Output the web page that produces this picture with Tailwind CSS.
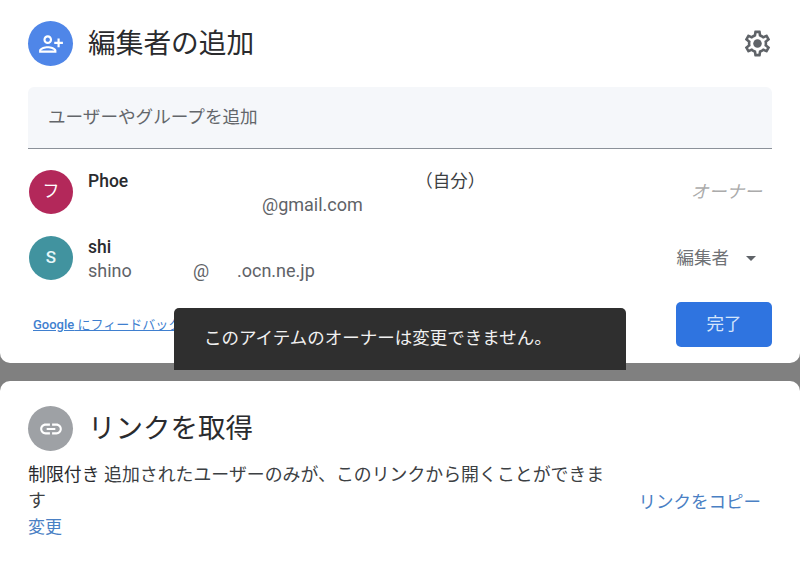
<!DOCTYPE html>
<html lang="ja">
<head>
    <meta charset="UTF-8">
    <title>編集者の追加</title>
    <script src="https://cdn.jsdelivr.net/npm/@tailwindcss/browser@4"></script>
</head>
<body class="bg-[#808080] font-[Roboto,'Noto_Sans_CJK_JP',sans-serif] overflow-hidden">
    <div class="relative w-[800px] h-[561px] flex flex-col gap-[18px]">
        <!-- share card -->
        <div class="h-[363px] bg-white rounded-b-[10px] pl-[28px] pr-[28px] pt-[21px]">
            <div class="flex items-center h-[45px]">
                <div class="w-[45px] h-[45px] rounded-full bg-[#4f86e8] flex items-center justify-center">
                    <svg class="w-[26px] h-[26px] -scale-x-100" viewBox="0 0 24 24" fill="#fff"><path d="M15 12c2.21 0 4-1.79 4-4s-1.79-4-4-4-4 1.79-4 4 1.79 4 4 4zm0-6c1.1 0 2 .9 2 2s-.9 2-2 2-2-.9-2-2 .9-2 2-2zm0 8c-2.67 0-8 1.34-8 4v2h16v-2c0-2.66-5.33-4-8-4zm-6 4c.22-.72 3.31-2 6-2 2.7 0 5.8 1.29 6 2H9zm-3-3v-3h3v-2H6V7H4v3H1v2h3v3h2z"/></svg>
                </div>
                <h1 class="ml-[15px] text-[27.7px] leading-[40px] text-[#2a2b2e]">編集者の追加</h1>
                <svg class="ml-auto mr-[-1px] w-[31px] h-[31px]" viewBox="0 0 24 24" fill="#5f6368"><path d="M19.43 12.98c.04-.32.07-.64.07-.98 0-.34-.03-.66-.07-.98l2.11-1.65c.19-.15.24-.42.12-.64l-2-3.46c-.09-.16-.26-.25-.44-.25-.06 0-.12.01-.17.03l-2.49 1c-.52-.4-1.08-.73-1.69-.98l-.38-2.65C14.46 2.18 14.25 2 14 2h-4c-.25 0-.46.18-.49.42l-.38 2.65c-.61.25-1.17.59-1.69.98l-2.49-1c-.06-.02-.12-.03-.18-.03-.17 0-.34.09-.43.25l-2 3.46c-.13.22-.07.49.12.64l2.11 1.65c-.04.32-.07.65-.07.98 0 .33.03.66.07.98l-2.11 1.65c-.19.15-.24.42-.12.64l2 3.46c.09.16.26.25.44.25.06 0 .12-.01.17-.03l2.49-1c.52.4 1.08.73 1.69.98l.38 2.65c.03.24.24.42.49.42h4c.25 0 .46-.18.49-.42l.38-2.65c.61-.25 1.17-.59 1.69-.98l2.49 1c.06.02.12.03.18.03.17 0 .34-.09.43-.25l2-3.46c.12-.22.07-.49-.12-.64l-2.11-1.65zm-1.98-1.71c.04.31.05.52.05.73 0 .21-.02.43-.05.73l-.14 1.13.89.7 1.08.84-.7 1.21-1.27-.51-1.04-.42-.9.68c-.43.32-.84.56-1.25.73l-1.06.43-.16 1.13-.2 1.35h-1.4l-.19-1.35-.16-1.13-1.06-.43c-.43-.18-.83-.41-1.23-.71l-.91-.7-1.06.43-1.27.51-.7-1.21 1.08-.84.89-.7-.14-1.13c-.03-.31-.05-.54-.05-.74s.02-.43.05-.73l.14-1.13-.89-.7-1.08-.84.7-1.21 1.27.51 1.04.42.9-.68c.43-.32.84-.56 1.25-.73l1.06-.43.16-1.13.2-1.35h1.39l.19 1.35.16 1.13 1.06.43c.43.18.83.41 1.23.71l.91.7 1.06-.43 1.27-.51.7 1.21-1.07.85-.89.7.14 1.13z"/><circle cx="12" cy="12" r="3.3"/></svg>
            </div>

            <div class="mt-[21px] h-[62px] bg-[#f5f7fa] rounded-t-[6px] border-b border-[#8b9199] pl-[20px] flex items-center text-[17.6px] text-[#63666a]">ユーザーやグループを追加</div>

            <!-- people -->
            <div class="mt-[18px] flex items-center h-[50px]">
                <div class="w-[44px] h-[44px] ml-[1px] rounded-full bg-[#b3285a] flex items-center justify-center text-white text-[17px]">フ</div>
                <div class="ml-[15px]">
                    <div class="h-[25px] leading-[28px] text-[17.5px] font-medium text-[#2a2b2e] flex">
                        <span>Phoe</span>
                        <span class="ml-[287px] font-normal text-[#3c4043]">（自分）</span>
                    </div>
                    <div class="h-[25px] leading-[26px] text-[18px] text-[#5f6368] pl-[174px]">@gmail.com</div>
                </div>
                <span class="ml-auto mr-[10px] text-[17.8px] italic text-[#ababab]">オーナー</span>
            </div>

            <div class="mt-[16px] flex items-center h-[50px]">
                <div class="w-[44px] h-[44px] ml-[1px] rounded-full bg-[#41939f] flex items-center justify-center text-[#e6f7f9] text-[17px] font-medium">S</div>
                <div class="ml-[15px]">
                    <div class="h-[25px] leading-[28px] text-[17.5px] font-medium text-[#2a2b2e]">shi</div>
                    <div class="h-[25px] leading-[26px] text-[18px] text-[#5f6368] flex">
                        <span class="w-[105px]">shino</span>
                        <span class="w-[44px]">@</span>
                        <span>.ocn.ne.jp</span>
                    </div>
                </div>
                <span class="ml-auto text-[17.5px] text-[#6f7276]">編集者</span>
                <span class="ml-[17px] mr-[16px] w-0 h-0 border-x-[5px] border-x-transparent border-t-[5px] border-t-[#5f6368]"></span>
            </div>

            <div class="mt-[19px] flex items-center justify-between h-[45px]">
                <a class="ml-[5px] mt-[1px] text-[13px] text-[#3f7fcf] underline"><span class="font-medium">Google</span> にフィードバックを送信</a>
                <button class="w-[96px] h-[45px] rounded-[5px] bg-[#2f74e0] text-[#d5e5fb] text-[17.5px]">完了</button>
            </div>
        </div>

        <!-- link card -->
        <div class="flex-1 bg-white rounded-t-[10px] pl-[28px] pr-[39px] pt-[25px]">
            <div class="flex items-center h-[45px]">
                <div class="w-[45px] h-[45px] rounded-full bg-[#9ea1a5] flex items-center justify-center">
                    <svg class="w-[26px] h-[26px]" viewBox="0 0 24 24" fill="#fff"><path d="M3.9 12c0-1.71 1.39-3.1 3.1-3.1h4V7H7c-2.76 0-5 2.24-5 5s2.24 5 5 5h4v-1.9H7c-1.71 0-3.1-1.39-3.1-3.1zM8 13h8v-2H8v2zm9-6h-4v1.9h4c1.71 0 3.1 1.39 3.1 3.1s-1.39 3.1-3.1 3.1h-4V17h4c2.76 0 5-2.24 5-5s-2.24-5-5-5z"/></svg>
                </div>
                <h2 class="ml-[15px] text-[27.5px] leading-[40px] text-[#2a2b2e]">リンクを取得</h2>
            </div>
            <div class="mt-[11px] flex items-center justify-between">
                <div class="w-[578px] text-[17.9px] leading-[26px] text-[#3c4043]">
                    <p><span class="text-[#2a2b2e]">制限付き</span> 追加されたユーザーのみが、このリンクから開くことができます</p>
                    <a class="block text-[17px] text-[#4a80c4]">変更</a>
                </div>
                <span class="mt-[2px] text-[17.5px] text-[#4a80c4]">リンクをコピー</span>
            </div>
        </div>

        <!-- toast -->
        <div class="absolute left-[174px] top-[308px] w-[452px] h-[62px] bg-[#2f2f2f] rounded-t-[5px] pl-[30px] pt-[15px] text-[17.5px] leading-[30px] text-[#f1f1f1]">このアイテムのオーナーは変更できません。</div>
    </div>
</body>
</html>
